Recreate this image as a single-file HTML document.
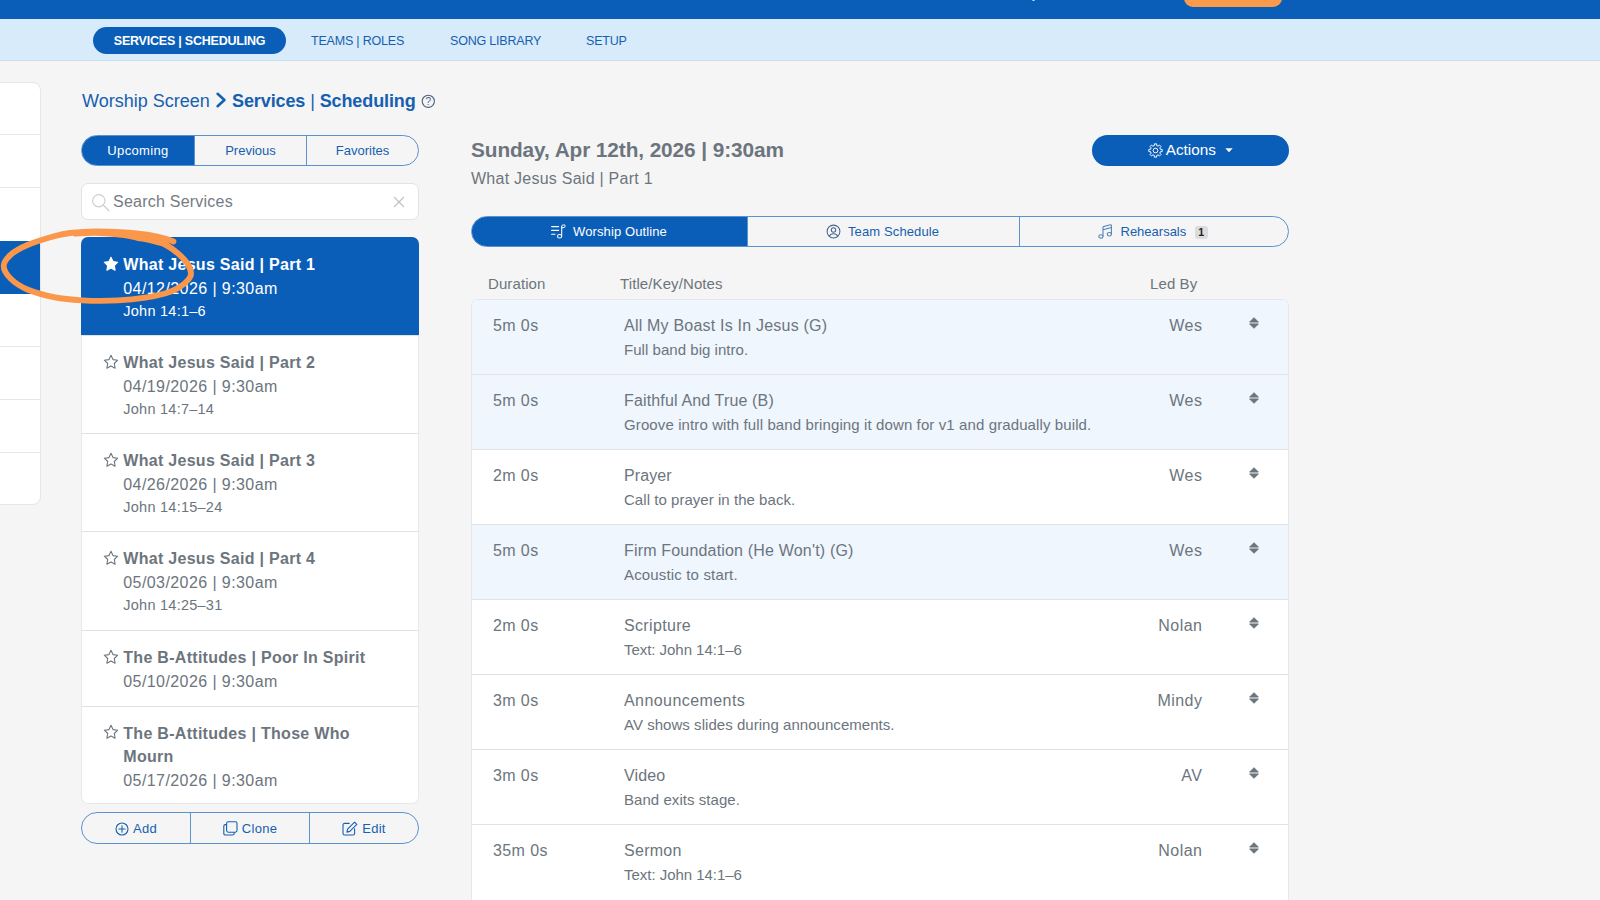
<!DOCTYPE html>
<html lang="en">
<head>
<meta charset="utf-8">
<title>Worship Screen - Services | Scheduling</title>
<style>
*{box-sizing:border-box;margin:0;padding:0}
html,body{width:1600px;height:900px;overflow:hidden}
body{background:#f5f5f5;font-family:"Liberation Sans",Arial,sans-serif;color:#6c757d;position:relative}
.abs{position:absolute}
.topbar{left:0;top:0;width:1600px;height:19px;background:#0a5eb8}
.orange{left:1184px;top:-13.500px;width:98.300px;height:20px;border-radius:9px;background:#fb9a4b}
.subnav{left:0;top:19px;width:1600px;height:42px;background:#d7ebfb;border-bottom:1px solid #c9dff1}
.pill{left:93px;top:26.6px;width:193px;height:27px;border-radius:14px;background:#0a5eb8;color:#fff;font-weight:bold;font-size:12.5px;line-height:28px;text-align:center;letter-spacing:-0.22px}
.navl{top:27.5px;height:27px;line-height:27px;font-size:12.5px;color:#1560b0;white-space:nowrap;letter-spacing:-0.2px}
/* left side panel */
.side{left:-1px;top:82px;width:41.500px;height:422.500px;background:#fff;border:1px solid #e6e6e6;border-radius:0 8px 8px 0;overflow:hidden}
.side i{position:absolute;left:0;width:41px;height:1px;background:#e6e6e6}
.side b{position:absolute;left:0;top:157.600px;width:41px;height:53.300px;background:#0a5eb8}
.crumb{left:82px;top:88px;height:26px;line-height:26px;font-size:18px;color:#1560b0;white-space:nowrap}
.crumb strong{font-weight:bold}
.seg{left:81px;top:135px;width:338px;height:31px;border:1px solid #5b93cf;border-radius:16px;overflow:hidden;background:#f5f5f5;display:flex}
.seg div{height:29px;line-height:30px;text-align:center;font-size:13px;color:#1560b0;border-left:1px solid #5b93cf}
.seg div:first-child{border-left:0}
.seg .on{background:#0a5eb8;color:#fff}
.search{left:81px;top:183px;width:338px;height:37px;background:#fff;border:1px solid #e3e3e3;border-radius:7px}
.search span{position:absolute;left:31px;top:0;line-height:35px;font-size:16px;color:#757b82;letter-spacing:.23px}
.list{left:81.2px;top:237.4px;width:337.4px;height:566.8px;background:#fff;border-radius:7px;box-shadow:inset 0 0 0 1px #e9e9e9}
.item{position:absolute;left:0;width:337.4px}
.item i{position:absolute;left:0;top:0;width:100%;height:1px;background:#e2e2e2}
.item.on{background:#0a5eb8;color:#fff;border-radius:7px 7px 0 0}
.item .t{position:absolute;left:42.1px;font-weight:bold;font-size:16px;line-height:23px;color:#6c757d;white-space:nowrap;letter-spacing:.29px}
.item .d{position:absolute;left:42.1px;font-size:16px;line-height:24px;color:#6c757d;white-space:nowrap;letter-spacing:.42px}
.item .s{position:absolute;left:42.1px;font-size:14.5px;line-height:22px;color:#6c757d;white-space:nowrap;letter-spacing:.25px}
.item.on .t,.item.on .d,.item.on .s{color:#fff}
.item svg{position:absolute;left:21.5px}
.btns{left:81px;top:812px;width:338px;height:32px;border:1px solid #5b93cf;border-radius:16px;overflow:hidden;display:flex;background:#f5f5f5}
.btns div{height:30px;line-height:31px;text-align:center;font-size:13px;letter-spacing:.28px;color:#1560b0;border-left:1px solid #5b93cf;position:relative}
.btns div:first-child{border-left:0}
.h1{left:471px;top:136px;font-size:20.8px;font-weight:bold;line-height:28px;color:#6c757d;white-space:nowrap;letter-spacing:-.09px}
.h2{left:471px;top:167px;font-size:16px;line-height:24px;color:#6c757d;white-space:nowrap;letter-spacing:.25px}
.actions{left:1091.7px;top:134.6px;width:197.3px;height:31.7px;border-radius:16px;background:#0a5eb8;color:#fff;font-size:15.3px;line-height:30.5px;text-align:center}
.tabs{left:471px;top:215.8px;width:818px;height:31px;border:1px solid #5b93cf;border-radius:16px;overflow:hidden;display:flex;background:#f5f5f5}
.tabs div{height:29px;line-height:29px;text-align:center;font-size:13px;color:#1560b0;border-left:1px solid #5b93cf;position:relative}
.tabs div:first-child{border-left:0}
.tabs .on{background:#0a5eb8;color:#fff}
.th{top:274px;letter-spacing:.1px;font-size:15px;line-height:20px;color:#6c757d;white-space:nowrap}
.table{left:471px;top:299px;width:818px;height:610px;background:#fff;border:1px solid #e4e7ea;border-radius:7px 7px 0 0;overflow:hidden}
.row{position:absolute;left:0;width:816px;height:75px}
.row i{position:absolute;left:0;top:-1px;width:100%;height:1px;background:#dfe3e7}
.row.blue{background:#eff6fd}
.row .du{position:absolute;left:21px;top:14px;letter-spacing:.4px;font-size:16px;line-height:24px;white-space:nowrap}
.row .ti{position:absolute;left:152px;top:14px;letter-spacing:.2px;font-size:16px;line-height:24px;white-space:nowrap}
.row .no{position:absolute;left:152px;top:39px;letter-spacing:.1px;font-size:15px;line-height:22px;white-space:nowrap}
.row .lb{position:absolute;right:85.6px;top:14px;letter-spacing:.45px;font-size:16px;line-height:24px;white-space:nowrap;text-align:right}
.row svg{position:absolute;left:777px;top:17.2px}
.ic{display:inline-block;vertical-align:middle;margin-right:4px;position:relative;top:-1px;line-height:0}
.badge{display:inline-block;vertical-align:middle;margin-left:9px;width:13px;height:13px;border-radius:3px;background:#dcdcdc;color:#222;font-size:9.5px;font-weight:bold;line-height:13px;text-align:center;position:relative;top:-1px}
.tic{line-height:0}
.tl{top:216px;height:31px;line-height:31px;font-size:13px;color:#1560b0;white-space:nowrap}
.badge2{left:1195px;top:225.5px;width:12.5px;height:13px;border-radius:3px;background:#dcdcdc;color:#222;font-size:10.5px;font-weight:bold;line-height:13px;text-align:center}
</style>
</head>
<body>
<div class="abs topbar"></div>
<div class="abs orange"></div>
<div class="abs subnav"></div>
<div class="abs pill">SERVICES | SCHEDULING</div>
<div class="abs navl" style="left:311px">TEAMS | ROLES</div>
<div class="abs navl" style="left:450px">SONG LIBRARY</div>
<div class="abs navl" style="left:586px">SETUP</div>

<div class="abs side">
  <i style="top:51px"></i><i style="top:104px"></i><b></b><i style="top:262.600px"></i><i style="top:315.700px"></i><i style="top:368.500px"></i>
</div>

<div class="abs crumb">Worship Screen</div>
<svg class="abs" style="left:214px;top:91px" width="14" height="18" viewBox="0 0 14 18"><path d="M3.6 2.8L10.4 9 3.6 15.2" fill="none" stroke="#1560b0" stroke-width="2.6" stroke-linecap="round" stroke-linejoin="round"/></svg>
<div class="abs crumb" style="left:232px;letter-spacing:-.1px"><strong>Services</strong> | <strong>Scheduling</strong></div>
<svg class="abs" style="left:421px;top:94px" width="15" height="15" viewBox="0 0 15 15"><circle cx="7.3" cy="7.3" r="6.1" fill="none" stroke="#4a6482" stroke-width="1.1"/><text x="7.3" y="10.600" font-family="Liberation Sans, sans-serif" font-size="10" fill="#4a6482" text-anchor="middle">?</text></svg>

<div class="abs seg">
  <div class="on" style="width:112px;letter-spacing:.35px">Upcoming</div><div style="width:112px">Previous</div><div style="width:112px">Favorites</div>
</div>

<div class="abs search"><svg style="position:absolute;left:7.500px;top:6.600px" width="22" height="22" viewBox="0 0 20 20"><circle cx="8" cy="8.8" r="5.6" fill="none" stroke="#cdd0d3" stroke-width="1.1"/><path d="M12.2 13L17.2 18" stroke="#cdd0d3" stroke-width="1.2" stroke-linecap="round"/></svg><span>Search Services</span><svg style="position:absolute;left:310px;top:11px" width="14" height="14" viewBox="0 0 14 14"><path d="M2.500 2.500l9 9M11.500 2.500l-9 9" stroke="#bfc4c9" stroke-width="1.3" stroke-linecap="round"/></svg></div>

<div class="abs list">
<div class="item on" style="top:0.1px;height:98.0px"><svg width="16" height="16" viewBox="0 0 16 16" style="top:18.5px"><path d="M8 1.3l2 4.3 4.7.6-3.400 3.300.800 4.700L8 11.900l-4.100 2.300.800-4.700L1.300 6.200 6 5.600z" fill="#fff" stroke="#fff" stroke-width="1.1" stroke-linejoin="round"/></svg><div class="t" style="top:16px">What Jesus Said | Part 1</div><div class="d" style="top:40px">04/12/2026 | 9:30am</div><div class="s" style="top:63px">John 14:1–6</div></div>
<div class="item" style="top:98.1px;height:97.8px"><i></i><svg width="16" height="16" viewBox="0 0 16 16" style="top:18.5px"><path d="M8 1.3l2 4.3 4.7.6-3.400 3.300.800 4.700L8 11.900l-4.100 2.300.800-4.700L1.300 6.200 6 5.600z" fill="none" stroke="#6c757d" stroke-width="1.1" stroke-linejoin="round"/></svg><div class="t" style="top:16px">What Jesus Said | Part 2</div><div class="d" style="top:40px">04/19/2026 | 9:30am</div><div class="s" style="top:63px">John 14:7–14</div></div>
<div class="item" style="top:195.9px;height:98.2px"><i></i><svg width="16" height="16" viewBox="0 0 16 16" style="top:18.5px"><path d="M8 1.3l2 4.3 4.7.6-3.400 3.300.800 4.700L8 11.900l-4.100 2.300.800-4.700L1.300 6.200 6 5.600z" fill="none" stroke="#6c757d" stroke-width="1.1" stroke-linejoin="round"/></svg><div class="t" style="top:16px">What Jesus Said | Part 3</div><div class="d" style="top:40px">04/26/2026 | 9:30am</div><div class="s" style="top:63px">John 14:15–24</div></div>
<div class="item" style="top:294.1px;height:98.7px"><i></i><svg width="16" height="16" viewBox="0 0 16 16" style="top:18.5px"><path d="M8 1.3l2 4.3 4.7.6-3.400 3.300.800 4.700L8 11.900l-4.100 2.300.800-4.700L1.300 6.200 6 5.600z" fill="none" stroke="#6c757d" stroke-width="1.1" stroke-linejoin="round"/></svg><div class="t" style="top:16px">What Jesus Said | Part 4</div><div class="d" style="top:40px">05/03/2026 | 9:30am</div><div class="s" style="top:63px">John 14:25–31</div></div>
<div class="item" style="top:392.8px;height:75.7px"><i></i><svg width="16" height="16" viewBox="0 0 16 16" style="top:18.5px"><path d="M8 1.3l2 4.3 4.7.6-3.400 3.300.800 4.700L8 11.900l-4.100 2.300.800-4.700L1.300 6.200 6 5.600z" fill="none" stroke="#6c757d" stroke-width="1.1" stroke-linejoin="round"/></svg><div class="t" style="top:16px">The B-Attitudes | Poor In Spirit</div><div class="d" style="top:40px">05/10/2026 | 9:30am</div></div>
<div class="item" style="top:468.5px;height:98.3px"><i></i><svg width="16" height="16" viewBox="0 0 16 16" style="top:18.5px"><path d="M8 1.3l2 4.3 4.7.6-3.400 3.300.800 4.700L8 11.900l-4.100 2.300.800-4.700L1.300 6.200 6 5.600z" fill="none" stroke="#6c757d" stroke-width="1.1" stroke-linejoin="round"/></svg><div class="t" style="top:16px">The B-Attitudes | Those Who</div><div class="t" style="top:39px">Mourn</div><div class="d" style="top:63px">05/17/2026 | 9:30am</div></div>
</div>

<div class="abs btns">
  <div style="width:108px"><span class="ic"><svg width="14" height="14" viewBox="0 0 14 14"><circle cx="7" cy="7" r="6" fill="none" stroke="#1560b0" stroke-width="1.1"/><path d="M7 3.800v6.400M3.800 7h6.400" stroke="#1560b0" stroke-width="1.1" stroke-linecap="round"/></svg></span>Add</div><div style="width:119px"><span class="ic"><svg width="15" height="15" viewBox="0 0 15 15"><rect x="3.600" y="0.800" width="10.400" height="10.400" rx="1.600" fill="none" stroke="#1560b0" stroke-width="1.1"/><path d="M3.600 3.600H2.400a1.600 1.600 0 0 0-1.600 1.600v7.200a1.600 1.600 0 0 0 1.600 1.600h7.200a1.600 1.600 0 0 0 1.600-1.600v-1.200" fill="none" stroke="#1560b0" stroke-width="1.1"/></svg></span>Clone</div><div style="width:109px"><span class="ic"><svg width="16" height="15" viewBox="0 0 16 15"><path d="M7.200 2.400H2.600A1.600 1.600 0 0 0 1 4v8.400A1.600 1.600 0 0 0 2.600 14H11a1.600 1.600 0 0 0 1.600-1.600V7.800" fill="none" stroke="#1560b0" stroke-width="1.1" stroke-linecap="round"/><path d="M12.600 1.200l2.200 2.200-7 7-2.900.7.700-2.900z" fill="none" stroke="#1560b0" stroke-width="1.1" stroke-linejoin="round"/></svg></span>Edit</div>
</div>

<div class="abs h1">Sunday, Apr 12th, 2026 | 9:30am</div>
<div class="abs h2">What Jesus Said | Part 1</div>
<div class="abs actions"><svg style="position:absolute;left:56px;top:8px" width="15" height="15" viewBox="0 0 16 16"><path d="M6.82 0.90L9.18 0.90L9.30 2.76L10.79 3.37L12.19 2.14L13.86 3.81L12.63 5.21L13.24 6.70L15.10 6.82L15.10 9.18L13.24 9.30L12.63 10.79L13.86 12.19L12.19 13.86L10.79 12.63L9.30 13.24L9.18 15.10L6.82 15.10L6.70 13.24L5.21 12.63L3.81 13.86L2.14 12.19L3.37 10.79L2.76 9.300L0.90 9.18L0.90 6.82L2.76 6.70L3.37 5.21L2.14 3.81L3.81 2.14L5.21 3.37L6.70 2.76Z" fill="none" stroke="#fff" stroke-width="1.05" stroke-linejoin="round"/><circle cx="8" cy="8" r="2.500" fill="none" stroke="#fff" stroke-width="1.05"/></svg><span style="position:absolute;left:74px;top:0">Actions</span><svg style="position:absolute;left:133px;top:13px" width="8" height="5" viewBox="0 0 8 5"><path d="M0.300 0.300h7.400L4 4.300z" fill="#fff"/></svg></div>

<div class="abs tabs">
  <div class="on" style="width:275px"></div><div style="width:272px"></div><div style="width:269px"></div>
</div>
<span class="abs tic" style="left:550.5px;top:223.8px"><svg width="15" height="15" viewBox="0 0 15 15"><path d="M0.600 2.600h7M0.600 6.400h7M0.600 10.200h3.400" stroke="#fff" stroke-width="1.1" stroke-linecap="round"/><ellipse cx="8.600" cy="12.200" rx="2.100" ry="1.700" fill="none" stroke="#fff" stroke-width="1.050"/><path d="M10.700 12.200V2.300" stroke="#fff" stroke-width="1.050"/><path d="M10.700 2.200c0-.6.300-.9.800-1l1.700-.4c.5-.1.800.1.800.6v1.300c0 .4-.2.600-.6.700l-2.700.600z" fill="none" stroke="#fff" stroke-width="1"/></svg></span><span class="abs tl" style="left:573.1px;color:#fff;letter-spacing:.1px">Worship Outline</span>
<span class="abs tic" style="left:825.7px;top:223.8px"><svg width="15" height="15" viewBox="0 0 15 15"><circle cx="7.500" cy="7.500" r="6.400" fill="none" stroke="#47678d" stroke-width="1.050"/><circle cx="7.500" cy="6" r="2.200" fill="none" stroke="#47678d" stroke-width="1.050"/><path d="M3.300 12.200c.7-1.700 2.300-2.500 4.200-2.500s3.500.8 4.200 2.500" fill="none" stroke="#47678d" stroke-width="1.050"/></svg></span><span class="abs tl" style="left:848px;letter-spacing:.12px">Team Schedule</span>
<span class="abs tic" style="left:1097.5px;top:223.8px"><svg width="15" height="15" viewBox="0 0 15 15"><ellipse cx="2.900" cy="12.400" rx="2.100" ry="1.700" fill="none" stroke="#4f7fb5" stroke-width="1.050"/><ellipse cx="11.300" cy="10.200" rx="2.100" ry="1.700" fill="none" stroke="#4f7fb5" stroke-width="1.050"/><path d="M5 12.400V3.600c0-.6.300-.9.900-1.100l6.400-1.700c.600-.2 1.100.1 1.100.800v8.600M5 5.800l8.400-2.200" fill="none" stroke="#4f7fb5" stroke-width="1.050" stroke-linejoin="round"/></svg></span><span class="abs tl" style="left:1120.5px">Rehearsals</span><span class="abs badge2">1</span>

<div class="abs th" style="left:488px">Duration</div>
<div class="abs th" style="left:620px">Title/Key/Notes</div>
<div class="abs th" style="left:1150px">Led By</div>

<div class="abs table">
<div class="row blue" style="top:0px"><div class="du">5m 0s</div><div class="ti" style="letter-spacing:0.21px">All My Boast Is In Jesus (G)</div><div class="no" style="letter-spacing:0.04px">Full band big intro.</div><div class="lb">Wes</div><svg width="10" height="12" viewBox="0 0 10 12"><path d="M5 0.700L9.400 5.100H0.600z M5 11.300L9.400 6.900H0.600z" fill="#6c757d" stroke="#6c757d" stroke-width="0.900" stroke-linejoin="round"/></svg></div>
<div class="row blue" style="top:75px"><i></i><div class="du">5m 0s</div><div class="ti" style="letter-spacing:0.15px">Faithful And True (B)</div><div class="no" style="letter-spacing:0.11px">Groove intro with full band bringing it down for v1 and gradually build.</div><div class="lb">Wes</div><svg width="10" height="12" viewBox="0 0 10 12"><path d="M5 0.700L9.400 5.100H0.600z M5 11.300L9.400 6.900H0.600z" fill="#6c757d" stroke="#6c757d" stroke-width="0.900" stroke-linejoin="round"/></svg></div>
<div class="row" style="top:150px"><i></i><div class="du">2m 0s</div><div class="ti" style="letter-spacing:0.10px">Prayer</div><div class="no" style="letter-spacing:0.04px">Call to prayer in the back.</div><div class="lb">Wes</div><svg width="10" height="12" viewBox="0 0 10 12"><path d="M5 0.700L9.400 5.100H0.600z M5 11.300L9.400 6.900H0.600z" fill="#6c757d" stroke="#6c757d" stroke-width="0.900" stroke-linejoin="round"/></svg></div>
<div class="row blue" style="top:225px"><i></i><div class="du">5m 0s</div><div class="ti" style="letter-spacing:0.18px">Firm Foundation (He Won't) (G)</div><div class="no" style="letter-spacing:0.16px">Acoustic to start.</div><div class="lb">Wes</div><svg width="10" height="12" viewBox="0 0 10 12"><path d="M5 0.700L9.400 5.100H0.600z M5 11.300L9.400 6.900H0.600z" fill="#6c757d" stroke="#6c757d" stroke-width="0.900" stroke-linejoin="round"/></svg></div>
<div class="row" style="top:300px"><i></i><div class="du">2m 0s</div><div class="ti" style="letter-spacing:0.34px">Scripture</div><div class="no" style="letter-spacing:-0.04px">Text: John 14:1–6</div><div class="lb">Nolan</div><svg width="10" height="12" viewBox="0 0 10 12"><path d="M5 0.700L9.400 5.100H0.600z M5 11.300L9.400 6.900H0.600z" fill="#6c757d" stroke="#6c757d" stroke-width="0.900" stroke-linejoin="round"/></svg></div>
<div class="row" style="top:375px"><i></i><div class="du">3m 0s</div><div class="ti" style="letter-spacing:0.43px">Announcements</div><div class="no" style="letter-spacing:0.04px">AV shows slides during announcements.</div><div class="lb">Mindy</div><svg width="10" height="12" viewBox="0 0 10 12"><path d="M5 0.700L9.400 5.100H0.600z M5 11.300L9.400 6.900H0.600z" fill="#6c757d" stroke="#6c757d" stroke-width="0.900" stroke-linejoin="round"/></svg></div>
<div class="row" style="top:450px"><i></i><div class="du">3m 0s</div><div class="ti" style="letter-spacing:0.15px">Video</div><div class="no" style="letter-spacing:0.05px">Band exits stage.</div><div class="lb">AV</div><svg width="10" height="12" viewBox="0 0 10 12"><path d="M5 0.700L9.400 5.100H0.600z M5 11.300L9.400 6.900H0.600z" fill="#6c757d" stroke="#6c757d" stroke-width="0.900" stroke-linejoin="round"/></svg></div>
<div class="row" style="top:525px"><i></i><div class="du">35m 0s</div><div class="ti" style="letter-spacing:0.28px">Sermon</div><div class="no" style="letter-spacing:-0.03px">Text: John 14:1–6</div><div class="lb">Nolan</div><svg width="10" height="12" viewBox="0 0 10 12"><path d="M5 0.700L9.400 5.100H0.600z M5 11.300L9.400 6.900H0.600z" fill="#6c757d" stroke="#6c757d" stroke-width="0.900" stroke-linejoin="round"/></svg></div>
</div>
<svg class="abs" style="left:0;top:0;pointer-events:none" width="220" height="320" viewBox="0 0 220 320"><path d="M173.5 241.5C172.1 241.0 168.9 239.6 165.0 238.5C161.1 237.4 154.6 235.8 150.0 235.0C145.4 234.2 141.8 233.9 137.5 233.5C133.2 233.1 130.9 232.7 124.0 232.3C117.1 231.9 105.0 231.2 96.0 231.3C87.0 231.4 76.8 232.2 70.0 233.0C63.2 233.8 62.1 234.0 55.0 236.0C47.9 238.0 34.8 241.9 27.5 245.0C20.2 248.1 15.0 251.0 11.0 254.5C7.0 258.0 3.7 261.9 3.7 266.0C3.7 270.1 7.0 275.1 11.0 279.0C15.0 282.9 20.2 286.4 27.5 289.5C34.8 292.6 45.8 295.5 55.0 297.3C64.2 299.1 73.3 299.7 82.5 300.3C91.7 300.9 100.8 301.0 110.0 300.7C119.2 300.4 128.3 299.9 137.5 298.7C146.7 297.5 158.1 295.4 165.0 293.5C171.9 291.6 175.2 289.8 179.0 287.5C182.8 285.2 186.0 282.4 188.0 280.0C190.0 277.6 191.2 275.8 191.0 273.0C190.8 270.2 189.2 266.2 187.0 263.0C184.8 259.8 181.7 256.6 178.0 253.5C174.3 250.4 169.7 246.7 165.0 244.5C160.3 242.3 154.6 241.3 150.0 240.2C145.4 239.1 141.8 238.7 137.5 237.8C133.2 236.9 130.9 235.8 124.0 235.0C117.1 234.2 104.2 233.1 96.0 232.8C87.8 232.6 78.5 233.4 75.0 233.5" fill="none" stroke="#fa974b" stroke-width="5.8" stroke-linecap="round" stroke-linejoin="round"/></svg>
<div class="abs" style="left:1032px;top:-2px;width:3px;height:3px;border-radius:2px;background:#cfe6fb"></div>
</body>
</html>
